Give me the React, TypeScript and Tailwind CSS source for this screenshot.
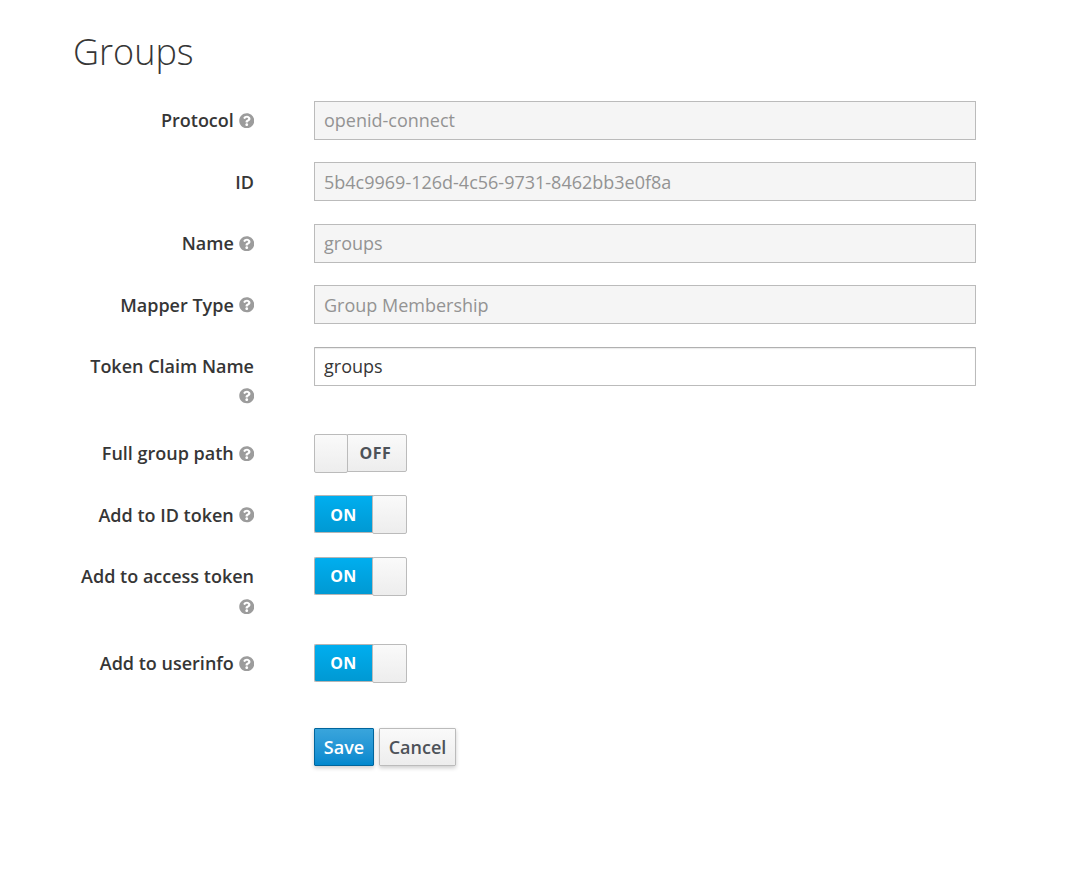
import { FaQuestionCircle } from "react-icons/fa";

function Help() {
  return <FaQuestionCircle className="inline-block text-[15.5px] text-[#9c9c9c] align-[-1px]" />;
}

function Label({ text, help = true }: { text: string; help?: boolean }) {
  return (
    <label className="w-[254px] shrink-0 pt-[4.35px] pb-[0.65px] text-right text-[18px] leading-[30px] font-semibold text-[#363636]">
      {text}
      {help && (
        <>
          {" "}
          <Help />
        </>
      )}
    </label>
  );
}

function Row({ label, help, children }: { label: string; help?: boolean; children: React.ReactNode }) {
  return (
    <div className="mb-[22.4px] flex min-h-[39px]">
      <Label text={label} help={help} />
      <div className="ml-[60px] w-[662px]">{children}</div>
    </div>
  );
}

function TextInput({ value, disabled }: { value: string; disabled?: boolean }) {
  return (
    <input
      readOnly
      value={value}
      className={
        disabled
          ? "h-[39px] w-full border border-[#bbbbbb] bg-[#f5f5f5] px-[9px] pb-[0.2px] text-[18px] text-[#939393] outline-none"
          : "h-[39px] w-full rounded-[1px] border border-[#bbbbbb] border-t-[#b0b0b0] bg-white px-[9px] text-[18px] text-[#363636] shadow-[inset_0_1px_1px_rgba(3,3,3,0.08)] outline-none"
      }
    />
  );
}

function Knob({ className }: { className: string }) {
  return (
    <span
      className={
        "h-[39px] shrink-0 rounded-[2px] border border-[#bbbbbb] bg-gradient-to-b from-[#fafafa] to-[#ededed] " +
        className
      }
    />
  );
}

function Toggle({ on }: { on: boolean }) {
  if (on) {
    return (
      <div className="flex h-[39px] w-[93px] items-start">
        <span className="flex h-[38px] w-[59px] items-center justify-center rounded-l-[2px] border border-[#b5b5b5] border-r-0 bg-gradient-to-b from-[#00aeef] to-[#0099d3] pt-[0.6px] pr-px text-[16px] font-bold tracking-[0.5px] text-white">
          ON
        </span>
        <Knob className="-ml-px w-[35px]" />
      </div>
    );
  }
  return (
    <div className="flex h-[39px] w-[93px] items-start">
      <Knob className="z-10 w-[34px]" />
      <span className="-ml-px flex h-[38px] w-[60px] items-center justify-center rounded-r-[2px] border border-[#bbbbbb] bg-gradient-to-b from-[#fafafa] to-[#ededed] pr-[3px] text-[16px] font-bold tracking-[0.5px] text-[#4d5258]">
        OFF
      </span>
    </div>
  );
}

export default function App() {
  return (
    <div className="h-[870px] w-[1080px] bg-white font-['Open_Sans',sans-serif]">
      <h1 className="pl-[73px] pt-[28px] text-[36px] leading-[48px] font-light text-[#363636]">Groups</h1>
      <form className="mt-[25px]">
        <Row label="Protocol">
          <TextInput value="openid-connect" disabled />
        </Row>
        <Row label="ID" help={false}>
          <TextInput value="5b4c9969-126d-4c56-9731-8462bb3e0f8a" disabled />
        </Row>
        <Row label="Name">
          <TextInput value="groups" disabled />
        </Row>
        <Row label="Mapper Type">
          <TextInput value="Group Membership" disabled />
        </Row>
        <div className="mb-[22.4px] flex">
          <label className="w-[254px] shrink-0 pt-[4.35px] pb-[0.65px] text-right text-[18px] leading-[30px] font-semibold text-[#363636]">
            Token Claim Name
            <br />
            <Help />
          </label>
          <div className="ml-[60px] w-[662px]">
            <TextInput value="groups" />
          </div>
        </div>
        <Row label="Full group path">
          <Toggle on={false} />
        </Row>
        <Row label="Add to ID token">
          <Toggle on />
        </Row>
        <div className="mb-[22.4px] flex">
          <label className="w-[254px] shrink-0 pt-[4.35px] pb-[0.55px] text-right text-[18px] leading-[30px] font-semibold text-[#363636]">
            Add to access token
            <br />
            <Help />
          </label>
          <div className="ml-[60px]">
            <Toggle on />
          </div>
        </div>
        <Row label="Add to userinfo">
          <Toggle on />
        </Row>
        <div className="ml-[314px] mt-[45px] flex gap-[5px]">
          <button
            type="button"
            className="h-[38px] w-[60px] rounded-[1px] border border-[#00659c] bg-gradient-to-b from-[#39a5dc] to-[#0088ce] text-[18px] font-semibold text-white shadow-[0_2px_4px_rgba(0,0,0,0.2)]"
          >
            Save
          </button>
          <button
            type="button"
            className="h-[38px] w-[77px] rounded-[1px] border border-[#bbbbbb] bg-gradient-to-b from-[#fafafa] to-[#ededed] text-[18px] font-semibold text-[#4d5258] shadow-[0_2px_4px_rgba(0,0,0,0.2)]"
          >
            Cancel
          </button>
        </div>
      </form>
    </div>
  );
}
